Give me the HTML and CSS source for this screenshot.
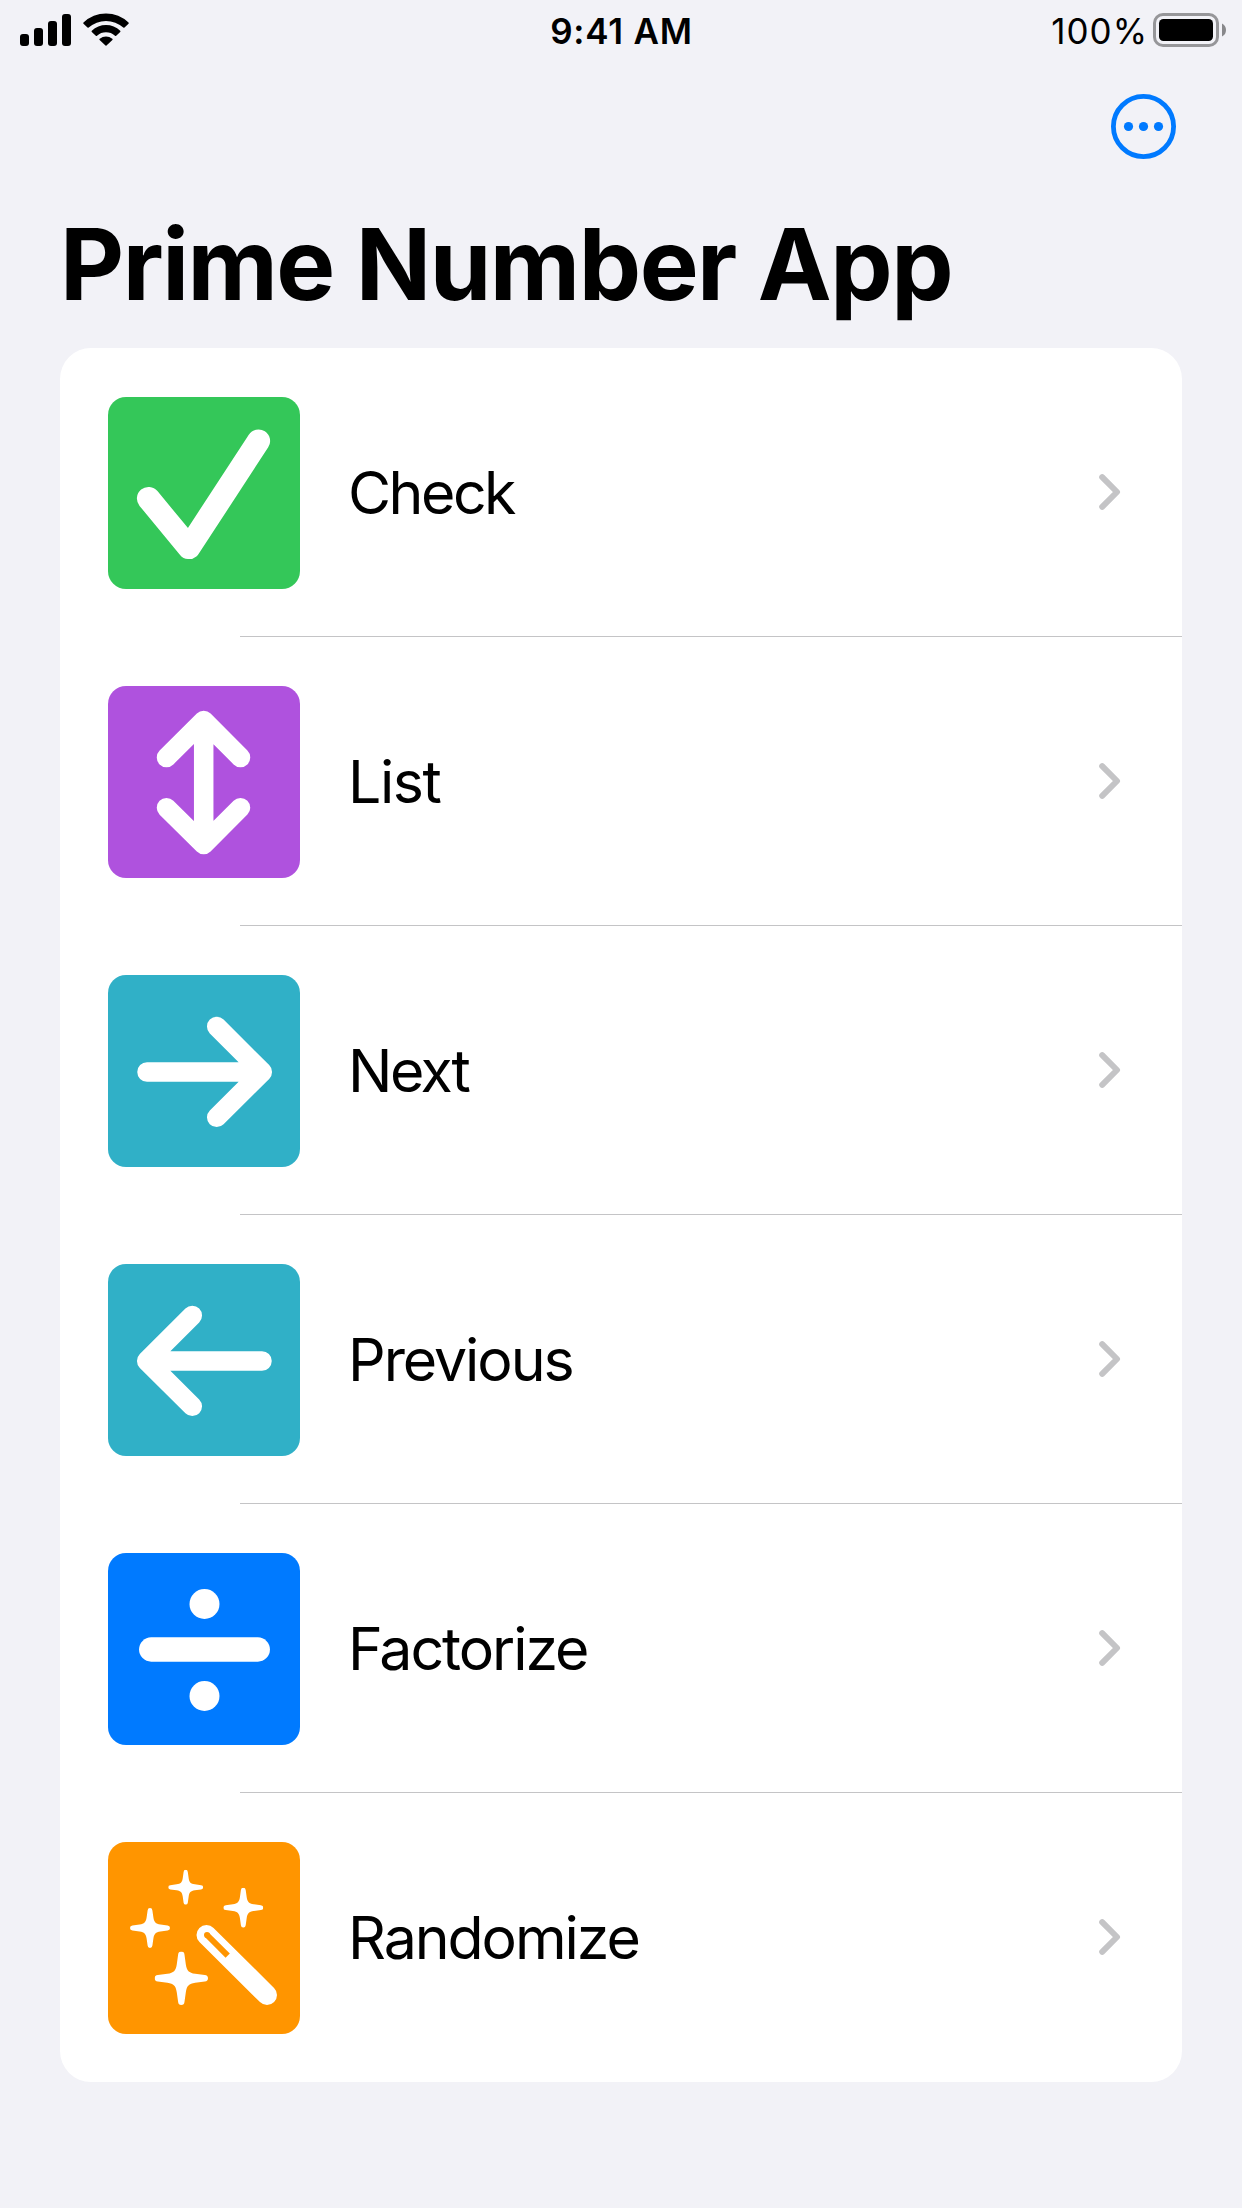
FILE: index.html
```html
<!DOCTYPE html>
<html lang="en">
<head>
<meta charset="utf-8">
<title>Prime Number App</title>
<link rel="stylesheet" href="styles.css">
</head>
<body>
<svg class="defs" aria-hidden="true">
  <symbol id="chevron" viewBox="0 0 22 36"><path d="M3.2 3.2 18 18 3.2 32.8" fill="none" stroke="#c4c4c6" stroke-width="6" stroke-linecap="round" stroke-linejoin="round"/></symbol>
  <symbol id="sparkle" viewBox="-1 -1 2 2"><path d="M-.12-.88Q-.11-1 0-1T.12-.88L.17-.52C.21-.28 .28-.21 .52-.17L.88-.12Q1-.11 1 0T.88 .12L.52 .17C.28 .21 .21 .28 .17 .52L.12 .88Q.11 1 0 1T-.12 .88L-.17 .52C-.21 .28-.28 .21-.52 .17L-.88 .12Q-1 .11-1 0T-.88-.12L-.52-.17C-.28-.21-.21-.28-.17-.52Z" fill="#fff" stroke="none"/></symbol>
</svg>
<header class="status">
  <div class="status-left">
    <svg class="signal" viewBox="0 0 51 32"><rect y="20" width="9" height="12" rx="3"/><rect x="14" y="14" width="9" height="18" rx="3"/><rect x="28" y="7" width="9" height="25" rx="3"/><rect x="42" width="9" height="32" rx="3"/></svg>
    <svg class="wifi" viewBox="0 0 46 34"><path d="M.5 9.6A32.2 32.2 0 0 1 45.5 9.6Q46 10.2 45.5 10.7L41.5 14.6Q40.9 15 40.3 14.6A25.8 25.8 0 0 0 5.7 14.6Q5.1 15 4.5 14.6L.5 10.7Q0 10.2 .5 9.6Z"/><path d="M8.8 17.7A20.5 20.5 0 0 1 37.2 17.7Q37.8 18.3 37.2 18.9L33.2 22.7Q32.6 23.2 32 22.7A13.8 13.8 0 0 0 14 22.7Q13.4 23.2 12.8 22.7L8.8 18.9Q8.2 18.3 8.8 17.7Z"/><path d="M16.7 25.7A10.5 10.5 0 0 1 29.3 25.7Q30 26.3 29.4 26.9L23.5 32.6Q23 33 22.5 32.6L16.6 26.9Q16 26.3 16.7 25.7Z"/></svg>
  </div>
  <div class="clock">9:41 AM</div>
  <div class="status-right">
    <span class="percent">100%</span>
    <svg class="battery" viewBox="0 0 73 34"><rect x="1.5" y="1.5" width="63" height="31" rx="8.5" fill="none" stroke="#969699" stroke-width="3"/><rect x="6" y="6" width="54" height="22" rx="4.5"/><path d="M69 10.5Q73 12.5 73 17T69 23.5Z" fill="#88888b"/></svg>
  </div>
</header>
<nav class="toolbar">
  <svg class="more" viewBox="0 0 65 65" fill="#007aff"><circle cx="32.5" cy="32.5" r="30.1" fill="none" stroke="#007aff" stroke-width="4.8"/><circle cx="17.5" cy="32.5" r="4.6"/><circle cx="32.5" cy="32.5" r="4.6"/><circle cx="47.5" cy="32.5" r="4.6"/></svg>
</nav>
<h1 class="title">Prime Number App</h1>
<main class="list">
  <div class="row">
    <svg class="tile green" viewBox="0 0 192 192"><path d="M40.5 101.5 81 150.5 150.5 44" stroke-width="23.2"/></svg>
    <span class="label label-tight">Check</span><svg class="chevron"><use href="#chevron"/></svg>
  </div>
  <div class="row">
    <svg class="tile purple" viewBox="0 0 192 192" stroke-width="19.5"><path d="M58.5 71.5 95.7 34.5 132.5 71.5M58.5 121.7 95.7 158.5 132.5 121.7M95.7 36V157"/></svg>
    <span class="label label-loose">List</span><svg class="chevron"><use href="#chevron"/></svg>
  </div>
  <div class="row">
    <svg class="tile teal" viewBox="0 0 192 192" stroke-width="19.5"><path d="M108.7 51.5 154.3 97 108.7 142.3M39 97H152"/></svg>
    <span class="label label-tight">Next</span><svg class="chevron"><use href="#chevron"/></svg>
  </div>
  <div class="row">
    <svg class="tile teal" viewBox="0 0 192 192" stroke-width="19.5"><path d="M84.3 51.5 38.7 97 84.3 142.3M154 97H41"/></svg>
    <span class="label">Previous</span><svg class="chevron"><use href="#chevron"/></svg>
  </div>
  <div class="row">
    <svg class="tile blue" viewBox="0 0 192 192"><path d="M43.2 96.5H149.8" stroke-width="24.3"/><g fill="#fff" stroke="none"><circle cx="96.5" cy="51" r="15"/><circle cx="96.5" cy="143" r="15"/></g></svg>
    <span class="label">Factorize</span><svg class="chevron"><use href="#chevron"/></svg>
  </div>
  <div class="row">
    <svg class="tile orange" viewBox="0 0 192 192"><use href="#sparkle" x="60.2" y="27.8" width="35" height="35"/><use href="#sparkle" x="115.3" y="45.7" width="40" height="40"/><use href="#sparkle" x="22" y="66" width="40" height="40"/><use href="#sparkle" x="46.6" y="109.6" width="53.4" height="53.4"/><path d="M98.5 93 159 153" stroke-width="20"/><circle cx="99" cy="93" r="3" fill="#ff9500" stroke="none"/><path class="slot" d="M99 93 119.7 113.7"/></svg>
    <span class="label">Randomize</span><svg class="chevron"><use href="#chevron"/></svg>
  </div>
</main>
</body>
</html>
```
FILE: styles.css
```css
* { box-sizing: border-box; }
body {
  margin: 0;
  min-height: 2208px;
  background: #f2f2f7;
  color: #000;
  font-family: Inter, "Liberation Sans", sans-serif;
}
svg { display: block; flex: none; }
.defs { position: absolute; width: 0; height: 0; }
.status {
  display: grid;
  grid-template-columns: 1fr auto 1fr;
  height: 60px;
  padding: 0 16px 0 20px;
}
.status-left { display: flex; align-items: flex-start; gap: 12px; }
.signal { width: 51px; height: 32px; margin-top: 14px; }
.wifi { width: 46px; height: 34px; margin-top: 13px; }
.clock { margin-left: -3px; font-size: 35px; font-weight: 600; line-height: 63px; letter-spacing: 0.8px; }
.status-right { display: flex; justify-content: flex-end; gap: 5px; }
.percent { font-size: 35px; line-height: 63px; letter-spacing: 1px; }
.battery { width: 73px; height: 34px; margin-top: 13px; }
.toolbar { display: flex; justify-content: flex-end; height: 144px; padding: 34px 66px 0 0; }
.more { width: 65px; height: 65px; }
.title {
  height: 144px;
  margin: 0;
  padding-left: 60px;
  font-size: 99px;
  font-weight: 700;
  line-height: 120px;
  letter-spacing: -1.5px;
  white-space: nowrap;
}
.list {
  width: 1122px;
  margin: 0 auto;
  overflow: hidden;
  background: #fff;
  border-radius: 31px;
}
.row {
  display: flex;
  align-items: center;
  height: 289px;
  padding: 1px 61px 0 48px;
}
.row:not(:last-child) {
  background: linear-gradient(#c4c4c6, #c4c4c6) 180px 100% / 100% 1px no-repeat;
}
.tile {
  width: 192px;
  height: 192px;
  border-radius: 18px;
  fill: none;
  stroke: #fff;
  stroke-linecap: round;
  stroke-linejoin: round;
}
.tile .slot { stroke: #ff9500; stroke-width: 6px; stroke-linecap: butt; }
.green { background: #34c759; }
.purple { background: #af52de; }
.teal { background: #30b0c7; }
.blue { background: #007aff; }
.orange { background: #ff9500; }
.label { flex: 1; margin-left: 48px; font-size: 59px; line-height: 72px; letter-spacing: -2.05px; }
.label-loose { letter-spacing: -1.4px; }
.label-tight { letter-spacing: -2.5px; }
.chevron { width: 22px; height: 36px; margin-top: -2px; }
```
